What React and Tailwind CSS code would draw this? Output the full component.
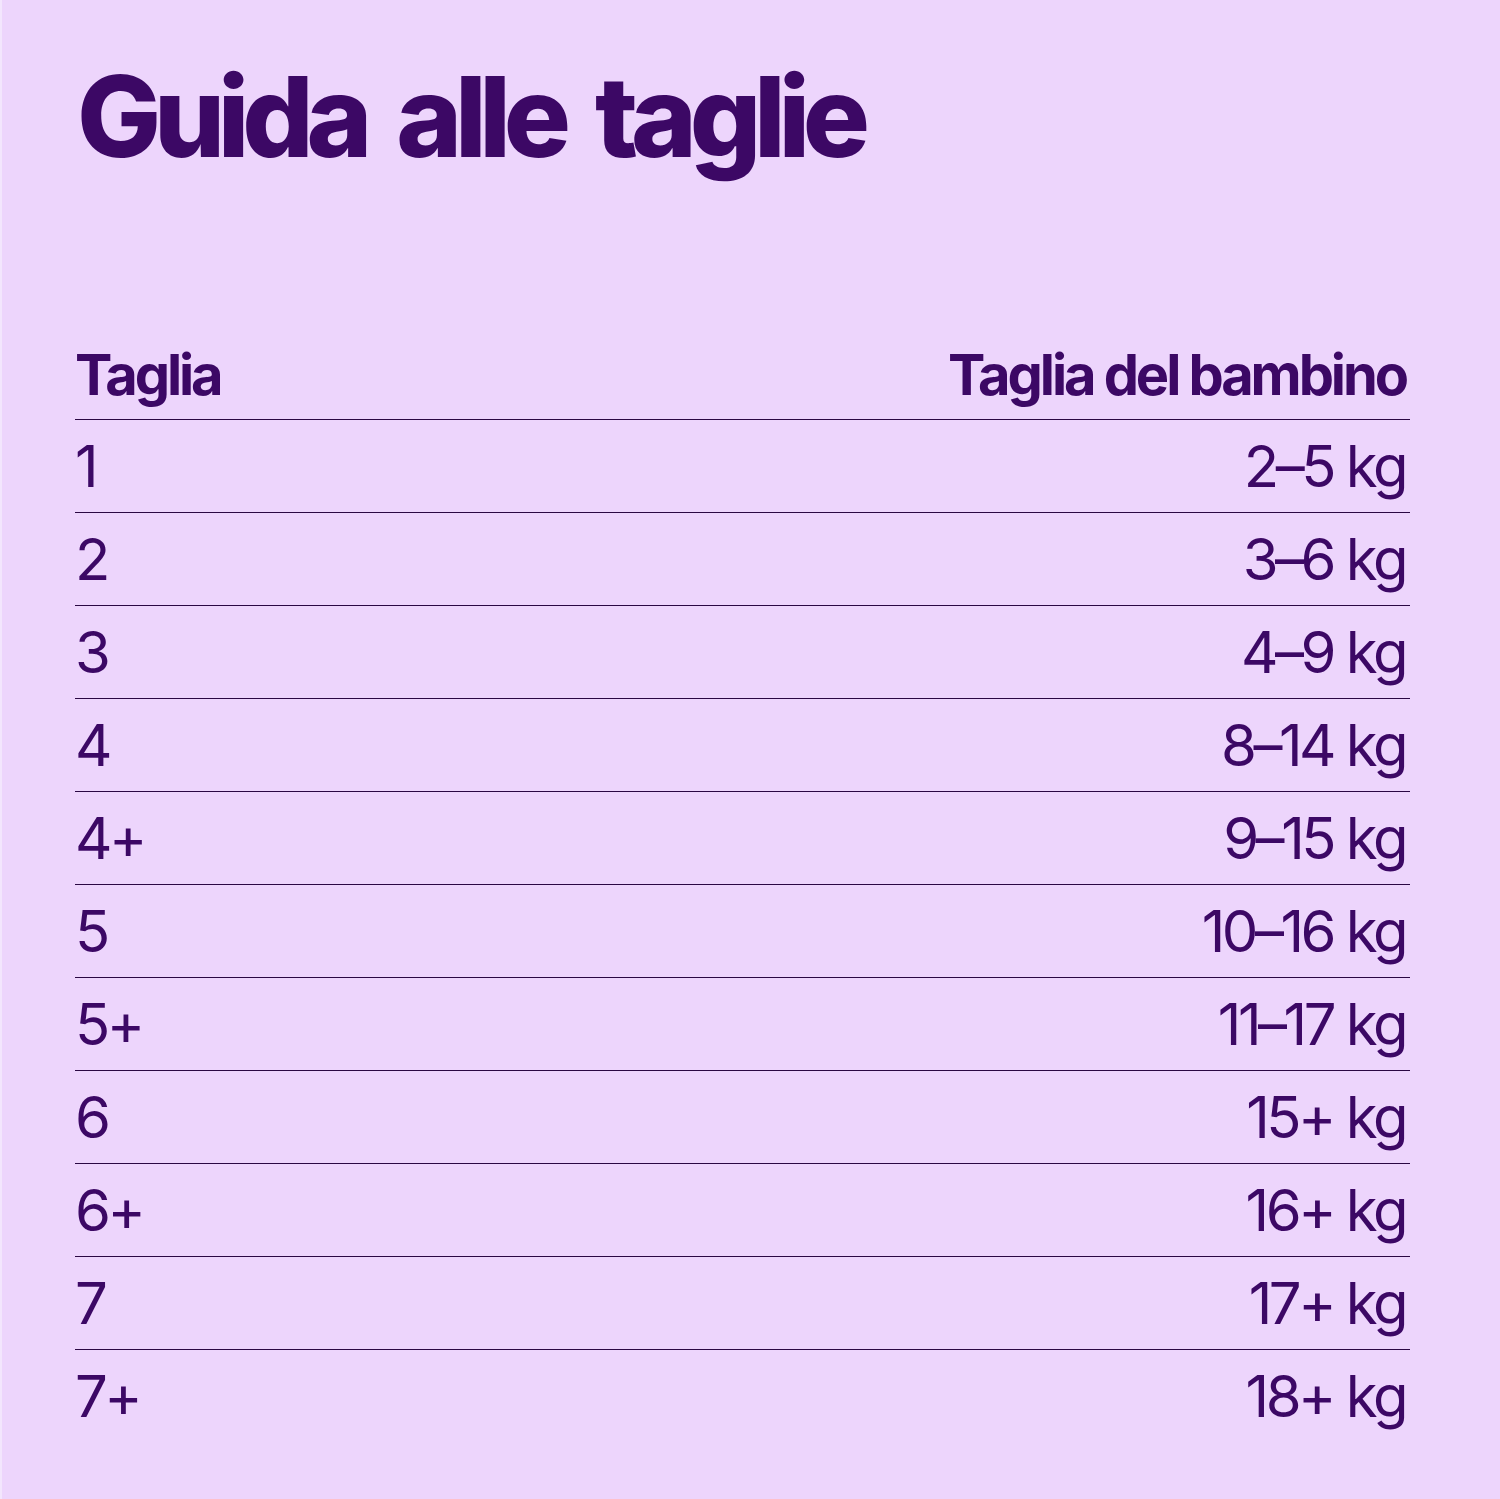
import React from "react";

const rows = [
  ["1", "2–5 kg"],
  ["2", "3–6 kg"],
  ["3", "4–9 kg"],
  ["4", "8–14 kg"],
  ["4+", "9–15 kg"],
  ["5", "10–16 kg"],
  ["5+", "11–17 kg"],
  ["6", "15+ kg"],
  ["6+", "16+ kg"],
  ["7", "17+ kg"],
  ["7+", "18+ kg"],
];

export default function App() {
  return (
    <div
      className="w-[1500px] h-[1499px] bg-[#edd5fc] text-[#3c0865] pl-[73px] pt-[60px] border-l-2 border-[#f3e6fd]"
      style={{ fontFamily: "Inter, 'Liberation Sans', sans-serif" }}
    >
      <h1 className="text-[112px] leading-[112px] font-extrabold tracking-[-0.065em] [word-spacing:14px] pl-[2px]">
        Guida alle taglie
      </h1>
      <div className="w-[1335px] mt-[173px]">
        <div className="flex justify-between items-end h-[74px] text-[56px] leading-[60px] font-bold tracking-[-0.055em] pb-[14px]">
          <span>Taglia</span>
          <span className="pr-[4px]">Taglia del bambino</span>
        </div>
        {rows.map(([s, w]) => (
          <div
            key={s}
            className="flex justify-between border-t-[1.5px] border-[#2a0842] h-[93px] text-[58px] leading-[92px] tracking-[-0.06em]"
          >
            <span>{s}</span>
            <span className="pr-[5px]">{w}</span>
          </div>
        ))}
      </div>
    </div>
  );
}
